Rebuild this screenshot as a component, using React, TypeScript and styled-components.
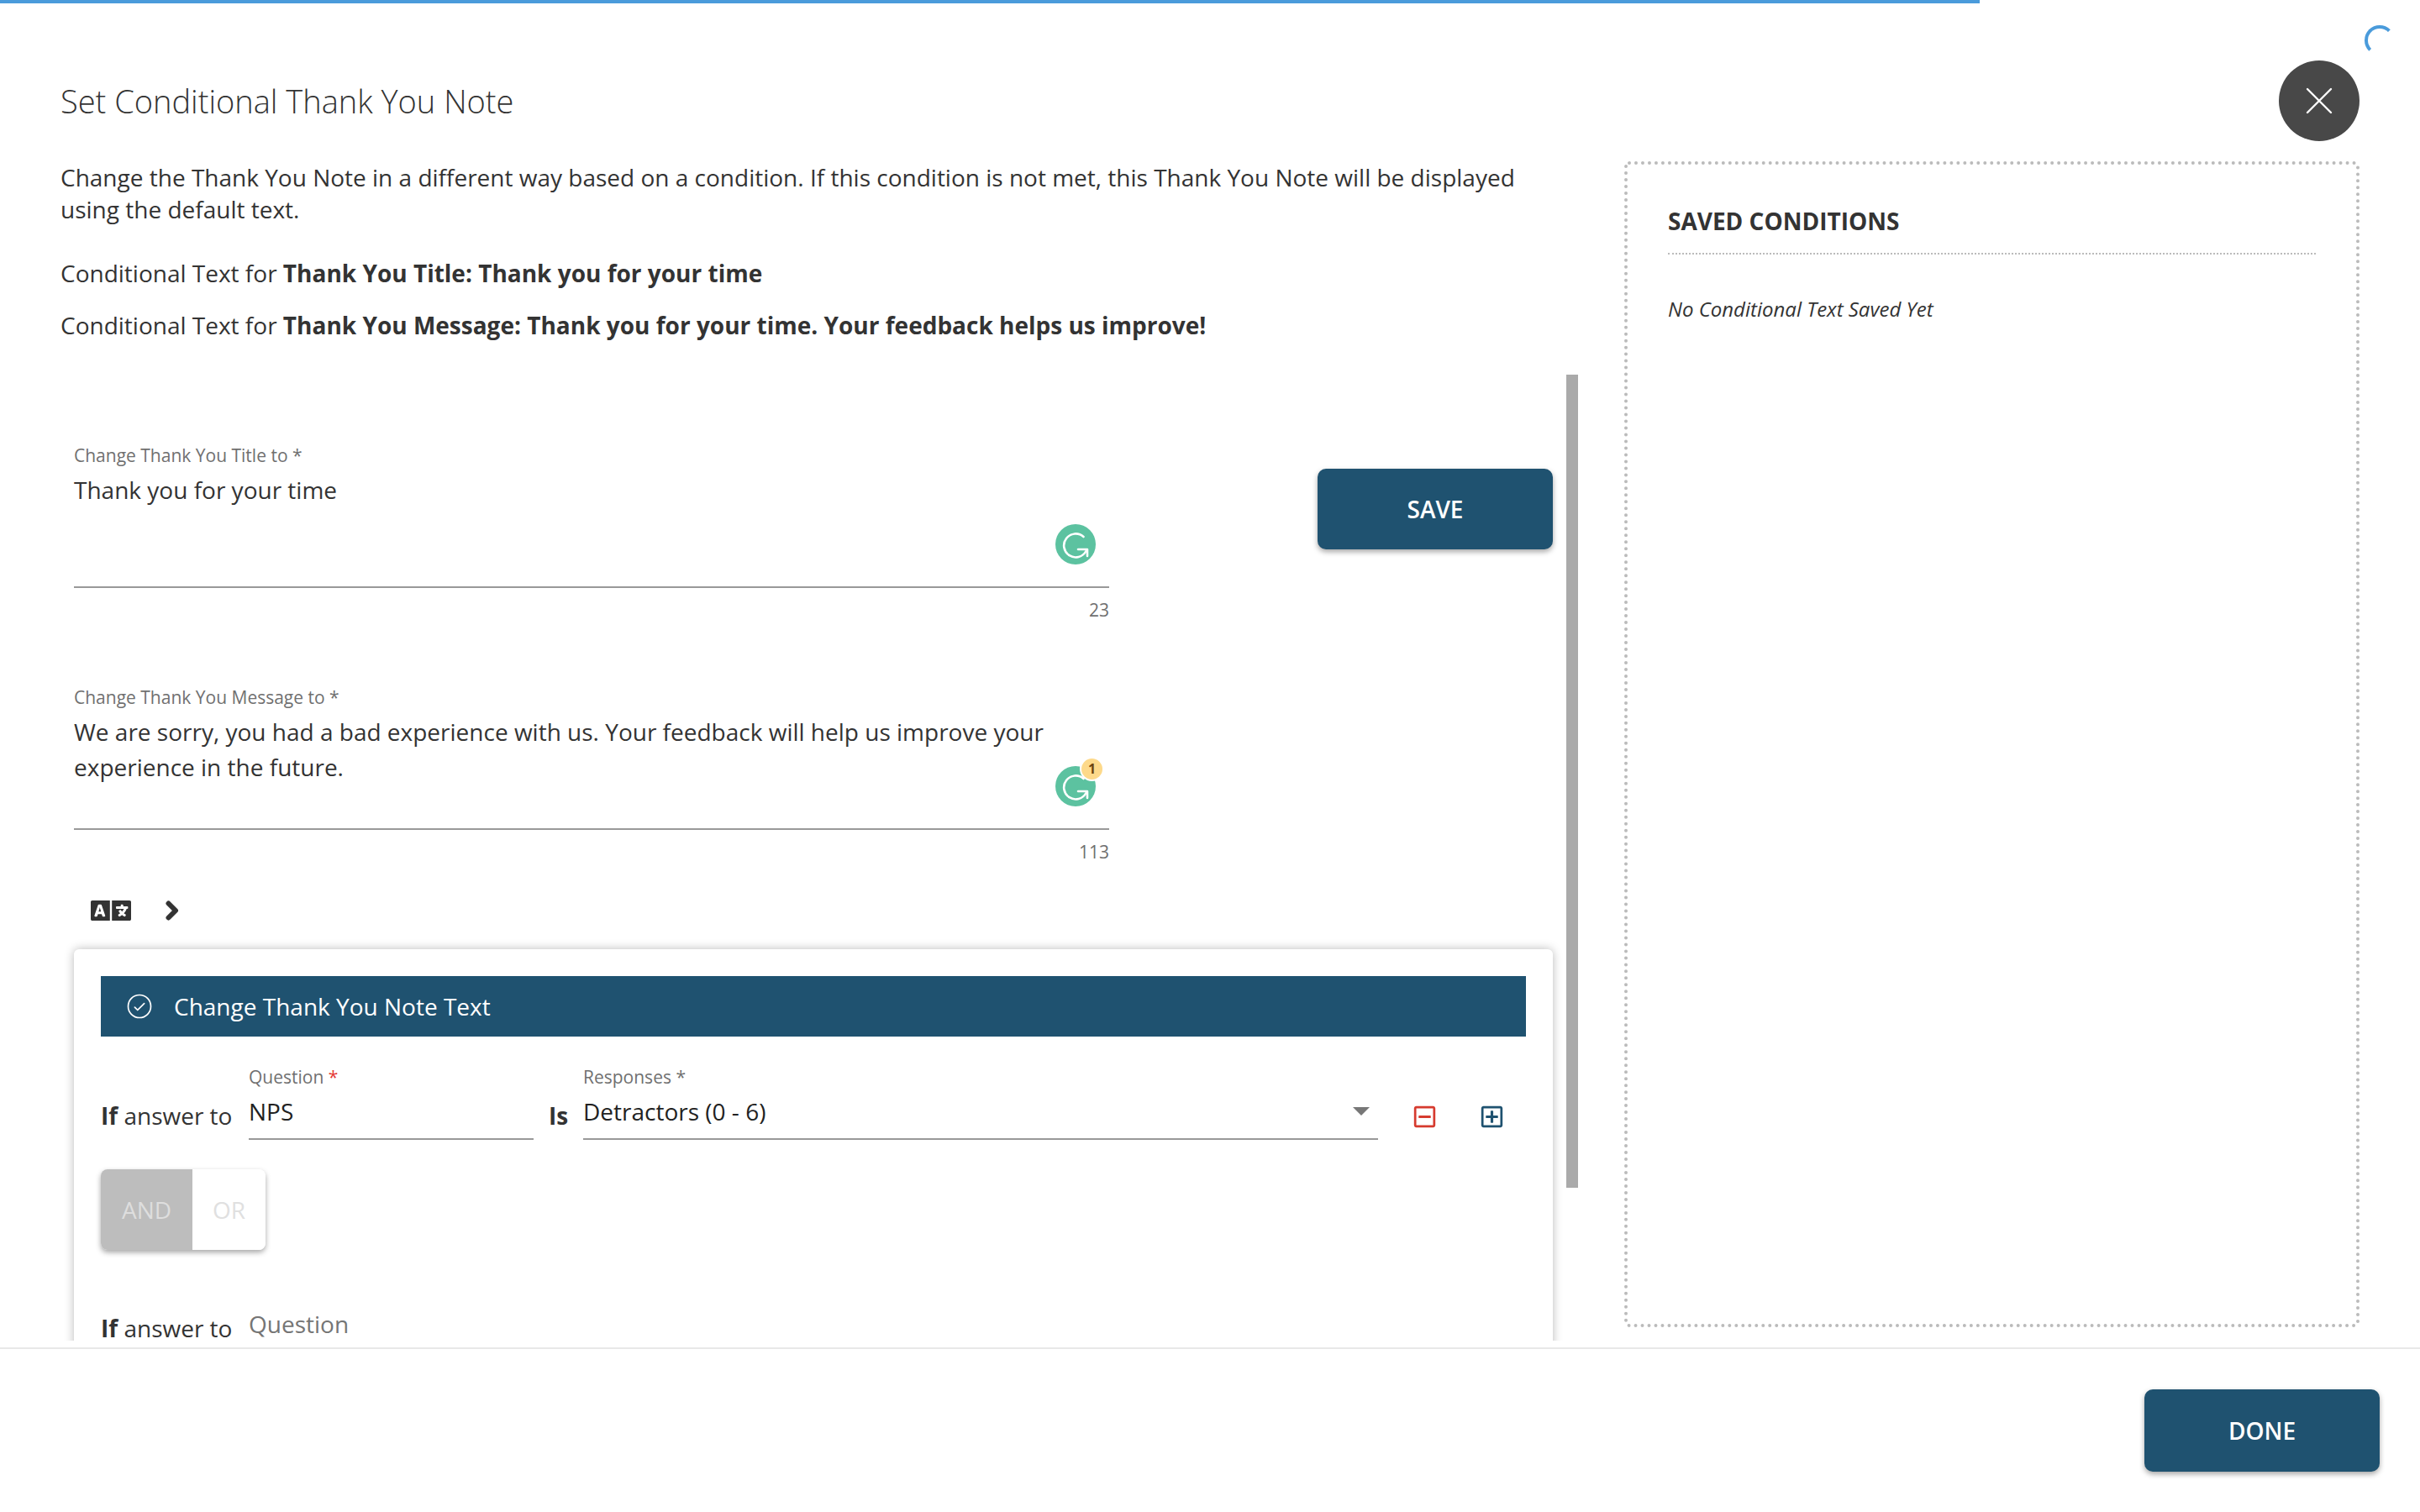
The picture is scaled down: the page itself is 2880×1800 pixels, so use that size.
import React from "react";
import styled, { createGlobalStyle } from "styled-components";
import { FaLanguage, FaRegMinusSquare, FaRegPlusSquare } from "react-icons/fa";
import { PiCheckCircleLight } from "react-icons/pi";

const Reset = createGlobalStyle`
  html, body {
    margin: 0;
    padding: 0;
    background: #fff;
  }
  * {
    box-sizing: border-box;
  }
`;

const Page = styled.div`
  position: relative;
  width: 2880px;
  height: 1800px;
  overflow: hidden;
  background: #fff;
  color: #333;
  font-family: "Open Sans", "Liberation Sans", sans-serif;
`;

// page load bar, sits over everything
const LoadBar = styled.div`
  position: absolute;
  top: 0;
  left: 0;
  width: 2356px;
  height: 4px;
  background: #4a9bdb;
  box-shadow: 20px 0 20px -14px rgba(74, 155, 219, 0.5);
`;

const Spinner = styled.div`
  position: absolute;
  top: 30px;
  right: 30px;
  width: 36px;
  height: 36px;
  border: 4px solid transparent;
  border-top-color: #4a9bdb;
  border-left-color: #4a9bdb;
  border-radius: 50%;
`;

const Header = styled.header`
  display: flex;
  align-items: center;
  justify-content: space-between;
  height: 96px;
  margin-top: 72px;
  padding: 0 72px;
`;

const Title = styled.h1`
  margin: 0;
  font-size: 38px;
  font-weight: 300;
  color: #333;
`;

const CloseButton = styled.button`
  display: flex;
  align-items: center;
  justify-content: center;
  width: 96px;
  height: 96px;
  padding: 0;
  border: 0;
  border-radius: 50%;
  background: #484848;
`;

const Body = styled.main`
  display: flex;
  justify-content: space-between;
  height: 1412px;
  margin-top: 24px;
  padding: 0 72px;
`;

const LeftColumn = styled.section`
  width: 1806px;
`;

const IntroText = styled.p`
  margin: 0 0 38px;
  width: 1760px;
  font-size: 28px;
  line-height: 38px;
`;

const ConditionLine = styled.p`
  margin: 0 0 24px;
  font-size: 28px;
  line-height: 38px;
`;

const ScrollArea = styled.div`
  position: relative;
  height: 1150px;
  margin-top: 40px;
  padding: 82px 0 0 16px;
  overflow: hidden;
`;

const ScrollThumb = styled.div`
  position: absolute;
  top: 0;
  right: 0;
  width: 14px;
  height: 968px;
  background: #aaa;
`;

const FormRow = styled.div`
  display: flex;
  align-items: flex-start;
  justify-content: space-between;
  width: 1760px;
`;

const FieldStack = styled.div`
  display: flex;
  flex-direction: column;
  gap: 76px;
  width: 1232px;
`;

const Field = styled.div`
  position: relative;
`;

const FieldLabel = styled.label`
  display: block;
  font-size: 21px;
  line-height: 28px;
  color: #707070;
`;

const FieldValue = styled.div`
  height: 144px;
  padding-top: 6px;
  border-bottom: 2px solid #999;
  font-size: 28px;
  line-height: 42px;
  color: #333;
`;

const FieldCount = styled.div`
  margin-top: 12px;
  font-size: 21px;
  line-height: 28px;
  color: #707070;
  text-align: right;
`;

const GrammarlyMark = styled.div`
  position: absolute;
  right: 16px;
  top: 96px;
  width: 48px;
  height: 48px;
`;

const GrammarlyBadge = styled.span`
  position: absolute;
  top: -9px;
  right: -8px;
  width: 25px;
  height: 25px;
  border-radius: 50%;
  background: #fdd98a;
  box-shadow: 0 0 0 2px #fff;
  color: #6b4310;
  font-size: 16px;
  font-weight: 700;
  line-height: 25px;
  text-align: center;
`;

const ActionButton = styled.button<{ $tall?: boolean }>`
  width: 280px;
  height: ${(p) => (p.$tall ? "98px" : "96px")};
  border: 0;
  border-radius: 10px;
  background: #1f5270;
  box-shadow: 0 3px 6px rgba(0, 0, 0, 0.35);
  color: #fff;
  font-family: inherit;
  font-size: 28px;
  font-weight: 600;
`;

const SaveButton = styled(ActionButton)`
  margin-top: 30px;
`;

const TranslateRow = styled.div`
  display: flex;
  align-items: center;
  gap: 41px;
  height: 24px;
  margin-top: 44px;
  padding-left: 20px;
  color: #333;
`;

const Card = styled.div`
  width: 1760px;
  margin-top: 34px;
  padding: 32px;
  border-radius: 6px;
  background: #fff;
  box-shadow: 0 0 12px rgba(0, 0, 0, 0.28);
`;

const CardHeader = styled.div`
  display: flex;
  align-items: center;
  gap: 23px;
  height: 72px;
  padding-left: 28px;
  background: #1f5270;
  color: #fff;
  font-size: 28px;
`;

const ConditionRow = styled.div`
  display: flex;
  align-items: flex-end;
  height: 89px;
  margin-top: 34px;
`;

const RowText = styled.span<{ $width: number }>`
  flex: none;
  width: ${(p) => p.$width}px;
  padding-bottom: 10px;
  font-size: 28px;
  line-height: 38px;
  color: #333;
  b {
    font-weight: 700;
  }
`;

const IsText = styled(RowText)`
  padding-left: 18px;
`;

const SelectField = styled.div<{ $width: number }>`
  position: relative;
  flex: none;
  width: ${(p) => p.$width}px;
`;

const SelectLabel = styled.div`
  height: 28px;
  font-size: 21px;
  line-height: 28px;
  color: #707070;
  i {
    font-style: normal;
    color: #e53935;
  }
`;

const SelectValue = styled.div<{ $empty?: boolean }>`
  height: 61px;
  padding-top: 8px;
  border-bottom: 2px solid #999;
  font-size: 28px;
  line-height: 38px;
  color: ${(p) => (p.$empty ? "#757575" : "#222")};
`;

const Caret = styled.span`
  position: absolute;
  right: 10px;
  top: 50px;
  border-left: 10px solid transparent;
  border-right: 10px solid transparent;
  border-top: 10px solid #777;
`;

const IconButtons = styled.div`
  display: flex;
  gap: 51px;
  margin-left: 41px;
  padding-bottom: 13px;
  font-size: 29px;
  line-height: 0;
`;

const IconSlot = styled.span<{ $color: string }>`
  color: ${(p) => p.$color};
`;

const LogicToggle = styled.div`
  display: flex;
  width: 196px;
  height: 96px;
  margin-top: 35px;
  border-radius: 8px;
  overflow: hidden;
  box-shadow: 0 3px 6px rgba(0, 0, 0, 0.35);
  font-size: 28px;
`;

const LogicOption = styled.div<{ $active?: boolean }>`
  display: flex;
  align-items: center;
  justify-content: center;
  width: ${(p) => (p.$active ? "109px" : "87px")};
  background: ${(p) => (p.$active ? "#bdbdbd" : "#fff")};
  color: ${(p) => (p.$active ? "#dedede" : "#e0e0e0")};
`;

const SecondRow = styled(ConditionRow)`
  margin-top: 33px;
`;

const SavedPanel = styled.aside`
  width: 875px;
  height: 1388px;
  padding: 47px 48px 0 48px;
  border: 4px dotted #bbb;
  border-radius: 6px;
`;

const SavedTitle = styled.h2`
  margin: 0;
  padding-bottom: 18px;
  border-bottom: 2px dotted #bbb;
  font-size: 28px;
  line-height: 40px;
  font-weight: 700;
  color: #333;
`;

const SavedEmpty = styled.p`
  margin: 48px 0 0;
  font-size: 24px;
  line-height: 34px;
  font-style: italic;
  color: #333;
`;

const Footer = styled.footer`
  display: flex;
  justify-content: flex-end;
  height: 196px;
  padding: 48px 48px 0 0;
  border-top: 2px solid #e8e8e8;
`;

function GrammarlyIcon() {
  return (
    <svg width="48" height="48" viewBox="0 0 48 48">
      <circle cx="24" cy="24" r="24" fill="#5cc2a0" />
      <path
        d="M33.5 15A14 14 0 1 0 36.5 32"
        fill="none"
        stroke="#fff"
        strokeWidth="2.6"
        strokeLinecap="round"
      />
      <path
        d="M27 30H38V38"
        fill="none"
        stroke="#fff"
        strokeWidth="2.6"
        strokeLinecap="round"
        strokeLinejoin="round"
      />
    </svg>
  );
}

function CloseIcon() {
  return (
    <svg width="32" height="32" viewBox="0 0 32 32">
      <path d="M2 2l28 28M30 2L2 30" stroke="#fff" strokeWidth="2.4" strokeLinecap="round" />
    </svg>
  );
}

function ChevronIcon() {
  return (
    <svg width="16" height="24" viewBox="0 0 16 24">
      <path
        d="M3.5 3.5L12 12L3.5 20.5"
        fill="none"
        stroke="currentColor"
        strokeWidth="6"
        strokeLinecap="round"
        strokeLinejoin="round"
      />
    </svg>
  );
}

export default function App() {
  return (
    <Page>
      <Reset />
      <LoadBar />
      <Spinner />
      <Header>
        <Title>Set Conditional Thank You Note</Title>
        <CloseButton aria-label="Close">
          <CloseIcon />
        </CloseButton>
      </Header>
      <Body>
        <LeftColumn>
          <IntroText>
            Change the Thank You Note in a different way based on a condition. If this condition is
            not met, this Thank You Note will be displayed using the default text.
          </IntroText>
          <ConditionLine>
            Conditional Text for <b>Thank You Title: Thank you for your time</b>
          </ConditionLine>
          <ConditionLine>
            Conditional Text for{" "}
            <b>Thank You Message: Thank you for your time. Your feedback helps us improve!</b>
          </ConditionLine>
          <ScrollArea>
            <ScrollThumb />
            <FormRow>
              <FieldStack>
                <Field>
                  <FieldLabel>Change Thank You Title to *</FieldLabel>
                  <FieldValue>Thank you for your time</FieldValue>
                  <GrammarlyMark>
                    <GrammarlyIcon />
                  </GrammarlyMark>
                  <FieldCount>23</FieldCount>
                </Field>
                <Field>
                  <FieldLabel>Change Thank You Message to *</FieldLabel>
                  <FieldValue>
                    We are sorry, you had a bad experience with us. Your feedback will help us
                    improve your experience in the future.
                  </FieldValue>
                  <GrammarlyMark>
                    <GrammarlyIcon />
                    <GrammarlyBadge>1</GrammarlyBadge>
                  </GrammarlyMark>
                  <FieldCount>113</FieldCount>
                </Field>
              </FieldStack>
              <SaveButton>SAVE</SaveButton>
            </FormRow>
            <TranslateRow>
              <FaLanguage size={48} />
              <ChevronIcon />
            </TranslateRow>
            <Card>
              <CardHeader>
                <PiCheckCircleLight size={36} />
                Change Thank You Note Text
              </CardHeader>
              <ConditionRow>
                <RowText $width={176}>
                  <b>If</b> answer to
                </RowText>
                <SelectField $width={339}>
                  <SelectLabel>
                    Question <i>*</i>
                  </SelectLabel>
                  <SelectValue>NPS</SelectValue>
                </SelectField>
                <IsText $width={59}>
                  <b>Is</b>
                </IsText>
                <SelectField $width={946}>
                  <SelectLabel>Responses *</SelectLabel>
                  <SelectValue>Detractors (0 - 6)</SelectValue>
                  <Caret />
                </SelectField>
                <IconButtons>
                  <IconSlot $color="#d63b2f">
                    <FaRegMinusSquare />
                  </IconSlot>
                  <IconSlot $color="#1f5270">
                    <FaRegPlusSquare />
                  </IconSlot>
                </IconButtons>
              </ConditionRow>
              <LogicToggle>
                <LogicOption $active>AND</LogicOption>
                <LogicOption>OR</LogicOption>
              </LogicToggle>
              <SecondRow>
                <RowText $width={176}>
                  <b>If</b> answer to
                </RowText>
                <SelectField $width={339}>
                  <SelectLabel />
                  <SelectValue $empty>Question</SelectValue>
                </SelectField>
              </SecondRow>
            </Card>
          </ScrollArea>
        </LeftColumn>
        <SavedPanel>
          <SavedTitle>SAVED CONDITIONS</SavedTitle>
          <SavedEmpty>No Conditional Text Saved Yet</SavedEmpty>
        </SavedPanel>
      </Body>
      <Footer>
        <ActionButton $tall>DONE</ActionButton>
      </Footer>
    </Page>
  );
}
